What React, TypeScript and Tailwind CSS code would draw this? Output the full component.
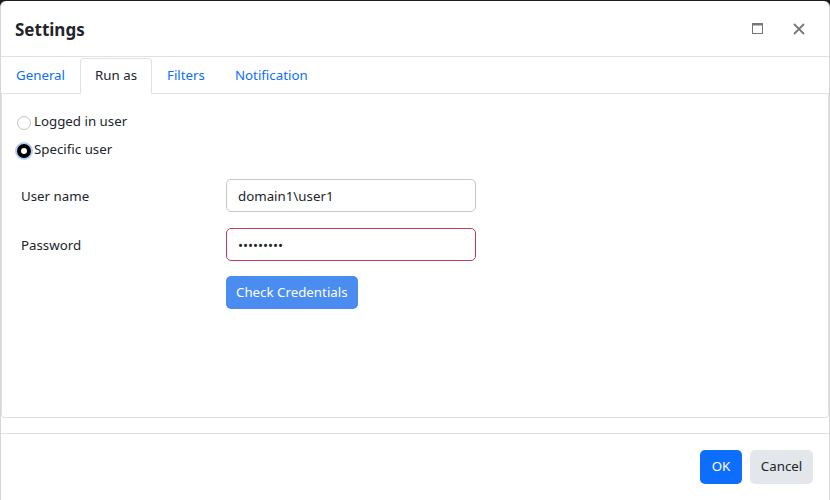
import React, { useState } from 'react';

const font = { fontFamily: '"Noto Sans", "Open Sans", Arial, sans-serif' };

const tabs = ['General', 'Run as', 'Filters', 'Notification'];

export default function App() {
  const [active, setActive] = useState('Run as');
  const [mode, setMode] = useState('specific');

  return (
    <div className="w-[830px] h-[500px] bg-[#1c1c1c] pt-px overflow-hidden" style={font}>
      <div className="h-[499px] bg-white rounded-t-[6px] border-l border-r border-[#d6d6d6] flex flex-col text-[#212529]">
        {/* Header */}
        <div className="h-[56px] flex items-center justify-between pl-[14px] pr-[24px] border-b border-[#dee2e6] shrink-0">
          <h2 className="text-[17px] font-bold text-[#212529] mt-[3px]">Settings</h2>
          <div className="flex items-center gap-[30px] text-[#777]">
            <svg width="11" height="11" viewBox="0 0 11 11" fill="none" stroke="currentColor">
              <rect x="0.5" y="0.5" width="10" height="10" strokeWidth="1" />
              <line x1="0.5" y1="1.5" x2="10.5" y2="1.5" strokeWidth="2" />
            </svg>
            <svg width="12" height="12" viewBox="0 0 12 12" stroke="currentColor" strokeWidth="1.8" strokeLinecap="round">
              <path d="M1.5 1.5l9 9M10.5 1.5l-9 9" />
            </svg>
          </div>
        </div>

        {/* Tabs */}
        <div className="flex border-b border-[#dee2e6] h-[37px] shrink-0 pt-px">
          {tabs.map(t => (
            <button
              key={t}
              onClick={() => setActive(t)}
              className={`px-[14px] text-[13.3px] -mb-px rounded-t-[4px] border ${
                active === t
                  ? 'text-[#212529] bg-white border-[#dee2e6] border-b-white'
                  : 'text-[#0d6efd] border-transparent'
              }`}
            >
              {t}
            </button>
          ))}
        </div>

        {/* Panel */}
        <div className="h-[324px] border-l border-r border-b border-[#dee2e6] rounded-b-[4px] shrink-0 pt-[19px]">
          <div className="flex flex-col gap-[10px] pl-[15px] text-[13.3px]">
            <label className="flex items-center h-[18px] cursor-pointer">
              <span
                onClick={() => setMode('logged')}
                className={`w-[14px] h-[14px] rounded-full mr-[3px] mt-[2px] ${
                  mode === 'logged'
                    ? 'border-[4px] border-black bg-white shadow-[0_0_0_2px_#b3cdf7]'
                    : 'border border-[#c4c4c4] bg-white'
                }`}
              />
              Logged in user
            </label>
            <label className="flex items-center h-[18px] cursor-pointer">
              <span
                onClick={() => setMode('specific')}
                className={`w-[14px] h-[14px] rounded-full mr-[3px] mt-[2px] ${
                  mode === 'specific'
                    ? 'border-[4px] border-black bg-white shadow-[0_0_0_2px_#b3cdf7]'
                    : 'border border-[#c4c4c4] bg-white'
                }`}
              />
              Specific user
            </label>
          </div>

          <div className="grid grid-cols-[205px_250px] items-center gap-y-[16px] pl-[19px] mt-[20px] text-[13.3px]">
            <span className="pt-[2px]">User name</span>
            <input
              defaultValue="domain1\user1"
              className="h-[33px] rounded-[5px] border border-[#c8c8c8] px-[11px] text-[13.3px] outline-none"
              style={font}
            />
            <span className="pt-[2px]">Password</span>
            <input
              type="password"
              defaultValue="password1"
              className="h-[33px] rounded-[5px] border border-[#c23a58] px-[11px] text-[13.3px] outline-none"
              style={font}
            />
            <span />
            <button className="justify-self-start h-[33px] px-[10px] rounded-[5px] bg-[#4a8cef] text-white text-[13.3px] -mt-[1px]">
              Check Credentials
            </button>
          </div>
        </div>

        {/* Footer */}
        <div className="mt-[15px] border-t border-[#dee2e6] flex-1 flex items-start justify-end gap-[8px] pr-[16px] pt-[16px]">
          <button className="h-[34px] w-[42px] rounded-[5px] bg-[#0d6efd] text-white text-[13.3px]">OK</button>
          <button className="h-[34px] w-[63px] rounded-[5px] bg-[#e3e6ea] text-[#212529] text-[13.3px]">Cancel</button>
        </div>
      </div>
    </div>
  );
}
